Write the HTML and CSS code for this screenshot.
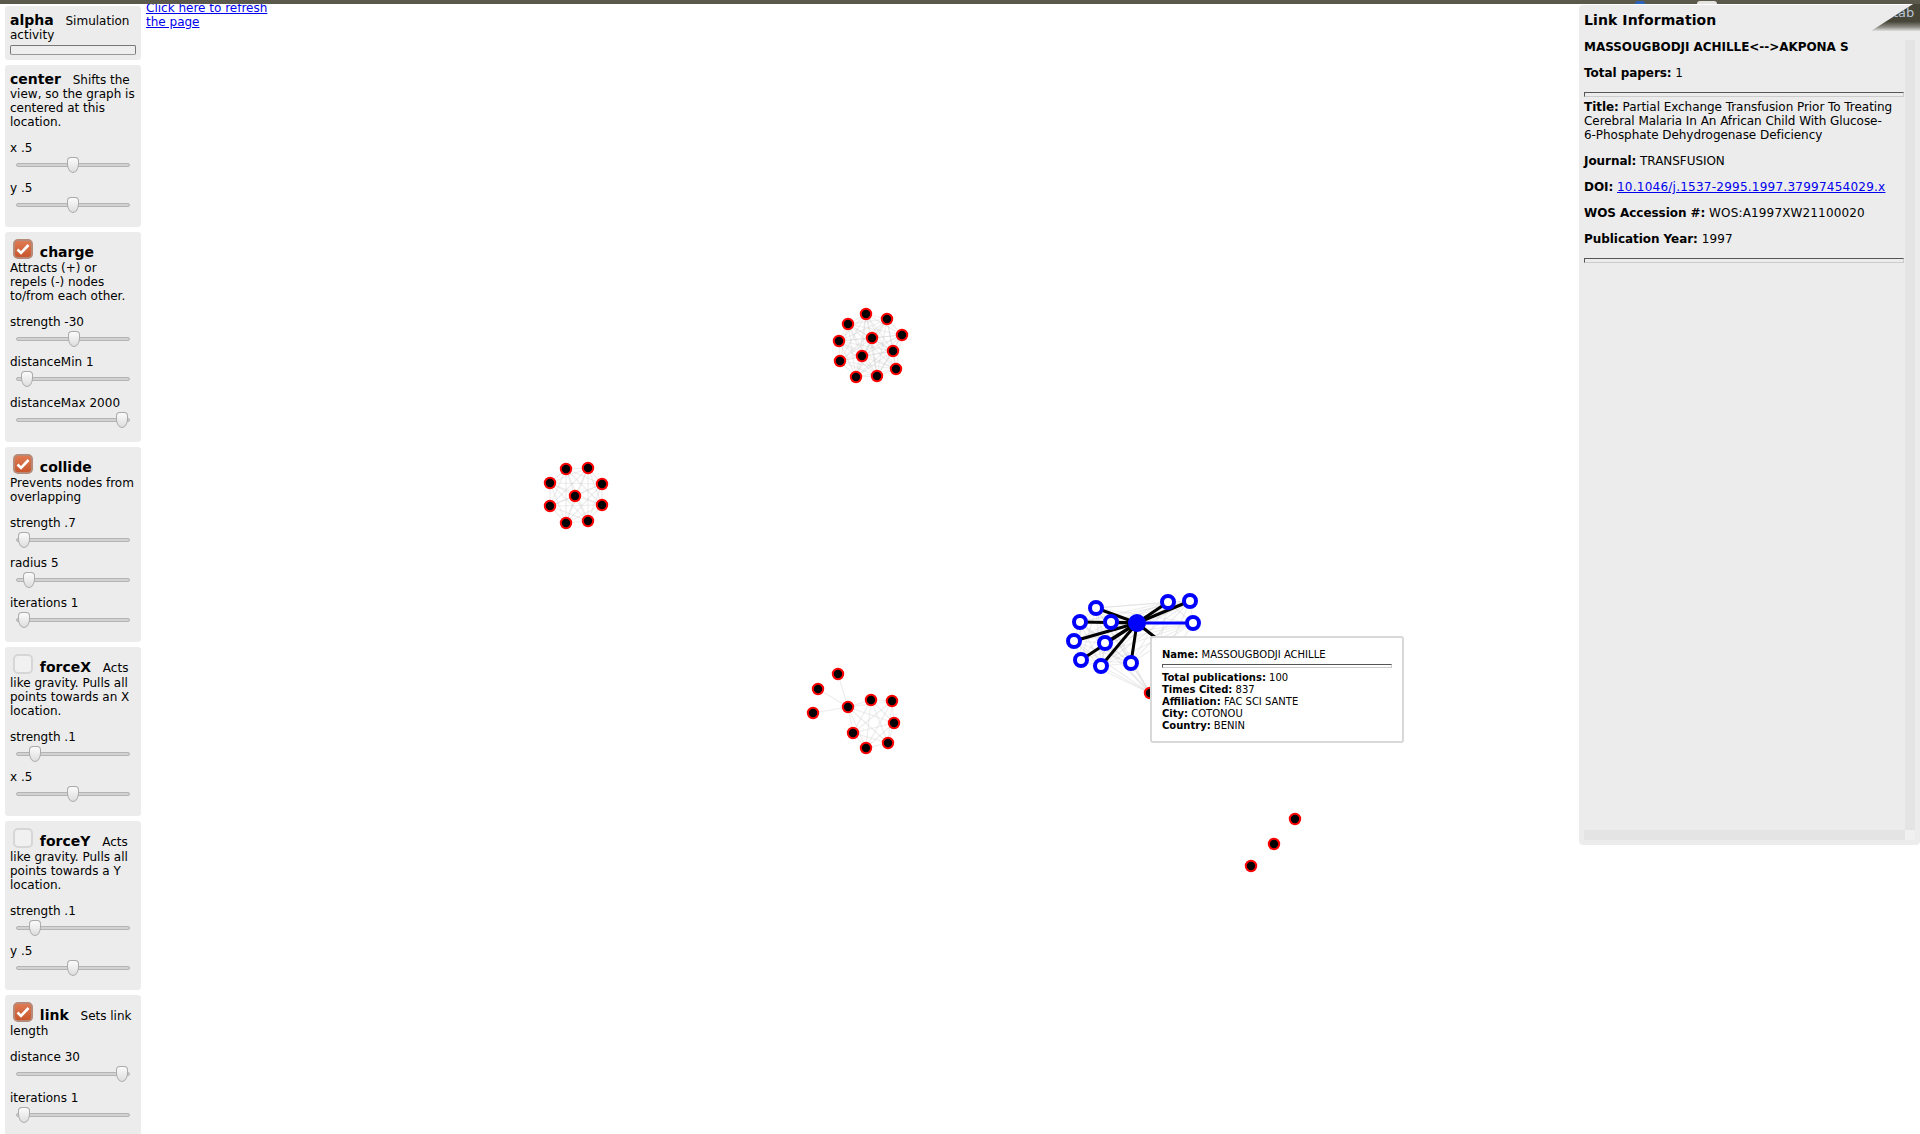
FILE: index.html
```html
<!DOCTYPE html>
<html lang="en">
<head>
  <meta charset="UTF-8">
  <meta name="viewport" content="width=device-width, initial-scale=1.0">
  <title>Co-authorship network</title>
  <link rel="stylesheet" href="styles.css">
</head>
<body>
  <div class="topbar">
    <span class="bar-icon"></span>
    <span class="bar-tab"></span>
  </div>
  <div class="page">
    <svg id="graph" class="graph" width="1920" height="1134"></svg>

    <div class="sidebar">
      <div class="card">
        <b class="name">alpha</b> Simulation activity
        <div class="alpha-bar"></div>
      </div>

      <div class="card">
        <b class="name">center</b> Shifts the view, so the graph is centered at this location.
        <div class="rows">
          <label>x .5</label><input type="range" value="50">
          <label>y .5</label><input type="range" value="50">
        </div>
      </div>

      <div class="card">
        <span class="check on"><svg width="14" height="12" viewBox="0 0 14 12"><path d="M1.5 6.5 L5 10 L12.5 2" fill="none" stroke="#fff" stroke-width="2.6"/></svg></span>
        <b class="name">charge</b> Attracts (+) or repels (-) nodes to/from each other.
        <div class="rows">
          <label>strength -30</label><input type="range" value="51">
          <label>distanceMin 1</label><input type="range" value="4">
          <label>distanceMax 2000</label><input type="range" value="99">
        </div>
      </div>

      <div class="card">
        <span class="check on"><svg width="14" height="12" viewBox="0 0 14 12"><path d="M1.5 6.5 L5 10 L12.5 2" fill="none" stroke="#fff" stroke-width="2.6"/></svg></span>
        <b class="name">collide</b> Prevents nodes from overlapping
        <div class="rows">
          <label>strength .7</label><input type="range" value="1">
          <label>radius 5</label><input type="range" value="6">
          <label>iterations 1</label><input type="range" value="1">
        </div>
      </div>

      <div class="card">
        <span class="check"></span>
        <b class="name">forceX</b> Acts like gravity. Pulls all points towards an X location.
        <div class="rows">
          <label>strength .1</label><input type="range" value="12">
          <label>x .5</label><input type="range" value="50">
        </div>
      </div>

      <div class="card">
        <span class="check"></span>
        <b class="name">forceY</b> Acts like gravity. Pulls all points towards a Y location.
        <div class="rows">
          <label>strength .1</label><input type="range" value="12">
          <label>y .5</label><input type="range" value="50">
        </div>
      </div>

      <div class="card">
        <span class="check on"><svg width="14" height="12" viewBox="0 0 14 12"><path d="M1.5 6.5 L5 10 L12.5 2" fill="none" stroke="#fff" stroke-width="2.6"/></svg></span>
        <b class="name">link</b> Sets link length
        <div class="rows">
          <label>distance 30</label><input type="range" value="99">
          <label>iterations 1</label><input type="range" value="1">
        </div>
      </div>
    </div>

    <div class="refresh"><a href="#">Click here to refresh the page</a></div>

    <div class="tooltip">
      <b>Name:</b> MASSOUGBODJI ACHILLE
      <hr>
      <b>Total publications:</b> 100<br>
      <b>Times Cited:</b> 837<br>
      <b>Affiliation:</b> FAC SCI SANTE<br>
      <b>City:</b> COTONOU<br>
      <b>Country:</b> BENIN
    </div>

    <div class="panel">
      <h3 class="panel-title">Link Information</h3>
      <div class="panel-body">
        <p><b>MASSOUGBODJI ACHILLE&lt;--&gt;AKPONA S</b></p>
        <p><b>Total papers:</b> 1</p>
        <hr>
        <p><b>Title:</b> Partial Exchange Transfusion Prior To Treating Cerebral Malaria In An African Child With Glucose-<br>6-Phosphate Dehydrogenase Deficiency</p>
        <p><b>Journal:</b> TRANSFUSION</p>
        <p><b>DOI:</b> <a class="digits" href="#">10.1046/j.1537-2995.1997.37997454029.x</a></p>
        <p><b>WOS Accession #:</b> <span class="digits-sm">WOS:A1997XW21100020</span></p>
        <p><b>Publication Year:</b> <span class="digits-sm">1997</span></p>
        <hr>
      </div>
      <div class="scroll-v"></div>
      <div class="scroll-h"></div>
      <div class="scroll-corner"></div>
    </div>
    <div class="page-curl"><span>tab</span></div>
  </div>
  <script src="graph.js"></script>
</body>
</html>
```

FILE: styles.css
```css
* { box-sizing: border-box; }
html, body { margin: 0; height: 100%; overflow: hidden; }
body {
  font-family: "DejaVu Sans", sans-serif;
  font-size: 12px;
  line-height: 14px;
  color: #000;
  background: #fff;
}
a { color: #0000ee; }

.topbar {
  position: absolute;
  top: 0; left: 0; right: 0;
  height: 4px;
  background: #5b594c;
  overflow: hidden;
  z-index: 5;
}
.bar-icon {
  position: absolute;
  left: 1635px; top: 1px;
  width: 10px; height: 6px;
  background: #2a62b8;
  border-radius: 3px;
}
.bar-tab {
  position: absolute;
  left: 1697px; top: 1px;
  width: 20px; height: 6px;
  background: #e4e4e0;
  border-radius: 3px;
}

.page {
  position: relative;
  display: flex;
  height: 1134px;
  overflow: hidden;
}
.graph { position: absolute; left: 0; top: 0; }

.sidebar {
  position: relative;
  flex: none;
  width: 146px;
  padding: 6px 0 0 5px;
}
.card {
  width: 136px;
  padding: 7px 5px 12px;
  margin-bottom: 5px;
  background: #ececec;
  border-radius: 3px;
}
.card:first-child { padding-bottom: 5px; }
.name { font-size: 14px; margin-right: 8px; }

.alpha-bar {
  height: 10px;
  margin-top: 3px;
  background: #eee;
  border: 1px solid #777;
  border-bottom-color: #999;
  border-radius: 2px;
}

.check {
  display: inline-block;
  width: 20px; height: 20px;
  margin: 0 3px 2px 3px;
  vertical-align: -4px;
  background: #f1f1f1;
  border: 2px solid #d6d6d6;
  border-radius: 5px;
  text-align: center;
}
.check.on {
  background: linear-gradient(#df7a52, #c9562c);
  border-color: #b58a78;
}
.check svg { display: block; margin: 2px 1px; }

.rows { margin-top: 12px; }
.rows label { display: block; }
.rows input {
  display: block;
  width: 114px; height: 20px;
  margin: 0 0 6.2px 6px;
  padding: 0;
  background: transparent;
  -webkit-appearance: none;
  appearance: none;
}
.rows input:last-child { margin-bottom: 0; }
.rows input::-webkit-slider-runnable-track {
  height: 4px;
  background: #d2d2d2;
  border: 1px solid #b4b4b4;
  border-radius: 2px;
}
.rows input::-webkit-slider-thumb {
  -webkit-appearance: none;
  width: 12px; height: 16px;
  margin-top: -7px;
  background: linear-gradient(#fbfbfb, #dedede);
  border: 1px solid #aaa;
  border-radius: 4px 4px 6px 6px / 4px 4px 9px 9px;
}

.refresh {
  position: relative;
  flex: none;
  width: 130px;
  height: 29px;
  padding-top: 1px;
}

.tooltip {
  position: absolute;
  left: 1150px; top: 636px;
  width: 254px; height: 107px;
  padding: 11px 10px;
  font-size: 10px;
  line-height: 12px;
  background: #fff;
  border: 2px solid #d8d8d8;
  border-radius: 3px;
}
hr {
  margin: 0;
  border: 1px solid;
  border-color: #555 #ccc #ccc #555;
}
.tooltip hr { height: 4px; margin: 3px 0 4px; }

.panel {
  position: relative;
  flex: none;
  width: 341px;
  height: 840px;
  margin: 5px 0 0 auto;
  padding: 0 5px 5px;
  background: #ececec;
  border-radius: 4px;
  display: grid;
  grid-template-columns: 321px 10px;
  grid-template-rows: 35px 1fr 10px;
}
.panel-title {
  grid-column: 1 / 3;
  margin: 0;
  padding-top: 7px;
  font-size: 14px;
  line-height: 16px;
  letter-spacing: 0.1px;
}
.panel-body { grid-row: 2; grid-column: 1; letter-spacing: -0.05px; }
.panel-body p { margin: 0 0 12px; width: 320px; }
.panel-body hr { height: 5px; margin: 12px 0 3px; width: 320px; }
.digits { letter-spacing: 0.24px; }
.digits-sm { letter-spacing: 0.15px; }
.scroll-v { grid-row: 2; grid-column: 2; background: #e4e4e4; }
.scroll-h { grid-row: 3; grid-column: 1; background: #e4e4e4; }
.scroll-corner { grid-row: 3; grid-column: 2; background: #f0f0f0; }

.page-curl {
  position: absolute;
  top: 4px; right: 0;
  width: 49px; height: 27px;
  background: linear-gradient(#474639 0, #474639 65%, #8d8c84 85%, #e0e0df 100%);
  clip-path: polygon(100% 0, 86% 0, 0 100%, 100% 100%);
  overflow: hidden;
}
.page-curl span {
  position: absolute;
  top: 2px; left: 22px;
  font-size: 13px;
  color: #b9c6d6;
}
```

FILE: graph.js
```js
const svg = document.getElementById("graph");
const NS = "http://www.w3.org/2000/svg";

function add(name, attrs) {
  const el = document.createElementNS(NS, name);
  for (const k in attrs) el.setAttribute(k, attrs[k]);
  svg.appendChild(el);
}

function faint(a, b) {
  add("line", { x1: a[0], y1: a[1], x2: b[0], y2: b[1], stroke: "#ccc", "stroke-width": 1.2, "stroke-opacity": 0.35 });
}

function allPairs(nodes) {
  for (let i = 0; i < nodes.length; i++)
    for (let j = i + 1; j < nodes.length; j++) faint(nodes[i], nodes[j]);
}

function redNodes(nodes) {
  nodes.forEach(n => add("circle", { cx: n[0], cy: n[1], r: 5.2, fill: "#000", stroke: "#f00", "stroke-width": 2 }));
}

const top12 = [[866,314],[887,319],[848,324],[902,335],[872,338],[839,341],[893,351],[862,356],[840,361],[896,369],[856,377],[877,376]];
const ring9 = [[566,469],[588,468],[550,483],[602,484],[575,496],[550,506],[602,505],[566,523],[588,521]];
const hub = [848,707];
const spokes = [[838,674],[818,689],[813,713]];
const rest = [[871,700],[892,701],[894,723],[888,743],[866,748],[853,733]];
const line3 = [[1295,819],[1274,844],[1251,866]];

allPairs(top12);
allPairs(ring9);
allPairs([hub].concat(rest));
spokes.forEach(n => faint(hub, n));
redNodes(top12);
redNodes(ring9);
redNodes(spokes.concat([hub], rest));
redNodes(line3);

// selected author and his co-authors
const center = [1137,623];
const blue = [[1168,602],[1190,601],[1096,608],[1080,622],[1111,622],[1074,641],[1105,643],[1081,660],[1101,666],[1131,663]];
const picked = [1193,623];
const hidden = [1150,693];

allPairs(blue.concat([picked, hidden]));
blue.forEach(n => add("line", { x1: center[0], y1: center[1], x2: n[0], y2: n[1], stroke: "#000", "stroke-width": 3 }));
add("line", { x1: center[0], y1: center[1], x2: 1190, y2: 665, stroke: "#000", "stroke-width": 3 });
add("line", { x1: center[0], y1: center[1], x2: picked[0], y2: picked[1], stroke: "#00f", "stroke-width": 3 });
redNodes([hidden]);
blue.concat([picked]).forEach(n => add("circle", { cx: n[0], cy: n[1], r: 6, fill: "#fff", stroke: "#00f", "stroke-width": 4 }));
add("circle", { cx: center[0], cy: center[1], r: 9, fill: "#00f" });
```
